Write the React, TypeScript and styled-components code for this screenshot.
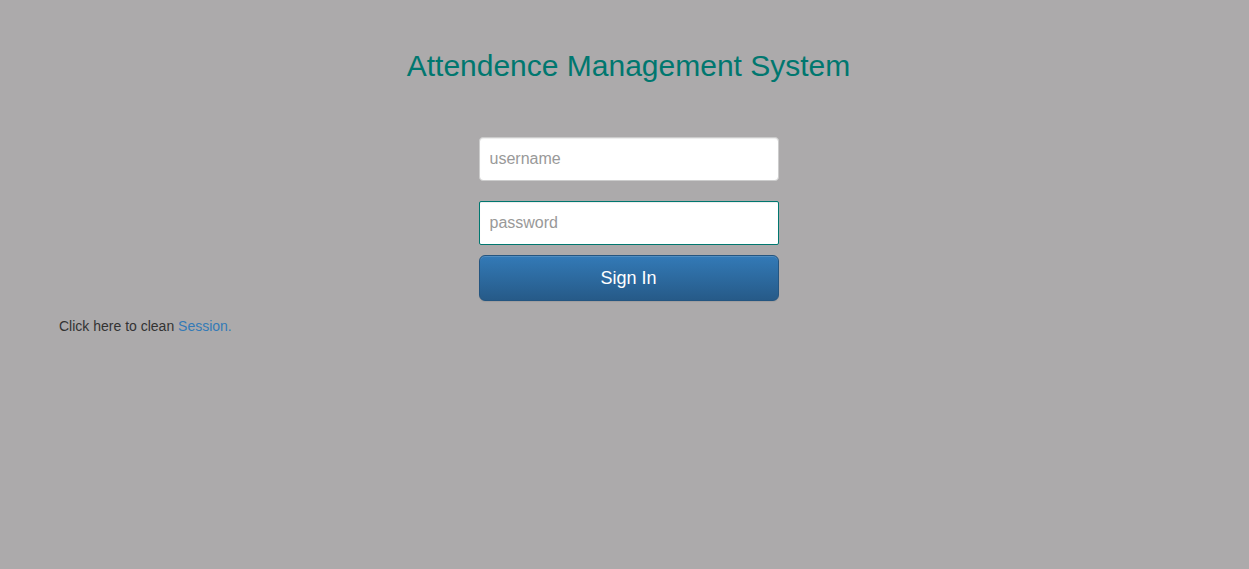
import React from "react";
import styled, { createGlobalStyle } from "styled-components";

const Global = createGlobalStyle`
  html, body { margin: 0; padding: 0; background: #acaaab; }
  body { font-family: "Liberation Sans", Arial, sans-serif; color: #333; font-size: 14px; line-height: 1.42857; }
  * { box-sizing: border-box; }
`;

const Page = styled.div`
  min-height: 569px;
  padding-left: 8px;
  display: flex;
  flex-direction: column;
`;

const Title = styled.h2`
  margin: 49px 0 0;
  text-align: center;
  font-size: 30px;
  font-weight: 400;
  line-height: 1.1;
  color: #00776f;
`;

const Form = styled.form`
  width: 300px;
  margin: 55px auto 0;
  display: flex;
  flex-direction: column;
`;

const Input = styled.input<{ $focused?: boolean; $gap: number }>`
  display: block;
  width: 100%;
  height: 44px;
  margin-top: ${(p) => p.$gap}px;
  padding: 0 10px;
  font-family: "Liberation Sans", Arial, sans-serif;
  font-size: 16px;
  color: #555;
  background: #fff;
  border: 1px solid ${(p) => (p.$focused ? "#00776f" : "#ccc")};
  border-radius: ${(p) => (p.$focused ? "2px" : "4px")};
  box-shadow: inset 0 1px 1px rgba(0, 0, 0, 0.075);
  outline: none;
  &::placeholder { color: #999; }
`;

const Button = styled.button`
  display: block;
  width: 100%;
  height: 46px;
  margin-top: 10px;
  font-family: "Liberation Sans", Arial, sans-serif;
  font-size: 18px;
  color: #fff;
  background: linear-gradient(to bottom, #337ab7 0%, #265a88 100%);
  border: 1px solid #245580;
  border-radius: 6px;
  box-shadow: inset 0 1px 0 rgba(255, 255, 255, 0.15), 0 1px 1px rgba(0, 0, 0, 0.075);
  cursor: pointer;
`;

const Note = styled.p`
  margin: 15px 0 0 51px;
  font-size: 14px;
  line-height: 20px;
  color: #333;
`;

const Link = styled.a`
  color: #337ab7;
  text-decoration: none;
`;

export default function App() {
  return (
    <>
      <Global />
      <Page>
        <Title>Attendence Management System</Title>
        <Form onSubmit={(e) => e.preventDefault()}>
          <Input $gap={0} type="text" placeholder="username" />
          <Input $gap={20} $focused type="password" placeholder="password" />
          <Button type="submit">Sign In</Button>
        </Form>
        <Note>
          Click here to clean <Link href="#">Session.</Link>
        </Note>
      </Page>
    </>
  );
}
